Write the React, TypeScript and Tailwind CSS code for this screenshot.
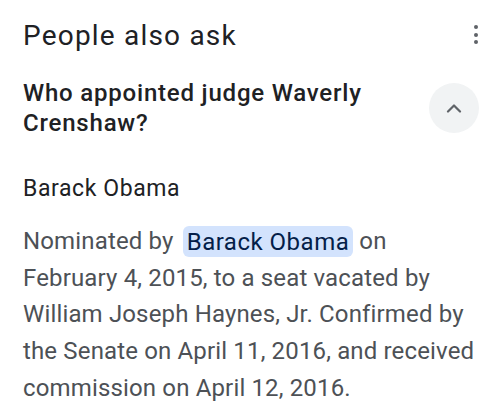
export default function App() {
  return (
    <div
      className="w-[500px] h-[416px] overflow-hidden bg-white pl-[23px] pr-[23px] pt-[18px]"
      style={{ fontFamily: 'Roboto, "Liberation Sans", sans-serif' }}
    >
      <div className="flex items-start justify-between">
        <h2 className="text-[28px] leading-[36px] font-normal tracking-[1.2px] text-[#202124]">People also ask</h2>
        <div className="mt-[7px] mr-[-1px] flex flex-col items-center gap-[3.5px]">
          <span className="h-[4px] w-[4px] rounded-full bg-[#5f6368]" />
          <span className="h-[4px] w-[4px] rounded-full bg-[#5f6368]" />
          <span className="h-[4px] w-[4px] rounded-full bg-[#5f6368]" />
        </div>
      </div>

      <div className="mt-[24px] flex items-center justify-between">
        <div className="text-[24px] leading-[30px] font-medium tracking-[0.8px] text-[#202124]">
          Who appointed judge Waverly
          <br />
          Crenshaw?
        </div>
        <div className="mr-[-2px] flex h-[50px] w-[50px] items-center justify-center rounded-full bg-[#f1f3f4]">
          <svg width="16" height="10" viewBox="0 0 16 10" fill="none">
            <path d="M2 8.5 L8 2.5 L14 8.5" stroke="#5f6368" strokeWidth="2.2" strokeLinecap="round" strokeLinejoin="round" />
          </svg>
        </div>
      </div>

      <div className="mt-[37px] text-[23px] leading-[28px] tracking-[0.6px] text-[#202124]">Barack Obama</div>

      <p className="mt-[20px] whitespace-nowrap text-[24px] leading-[36.7px] tracking-[0.15px] text-[#4d5156]">
        Nominated by{' '}
        <span className="ml-[3px] rounded-md bg-[#d3e3fd] px-[4px] py-[1.5px] tracking-[0.5px] text-[#041e49]">Barack Obama</span> on
        <br />
        February 4, 2015, to a seat vacated by
        <br />
        William Joseph Haynes, Jr. Confirmed by
        <br />
        the Senate on April 11, 2016, and received
        <br />
        commission on April 12, 2016.
      </p>
    </div>
  );
}
